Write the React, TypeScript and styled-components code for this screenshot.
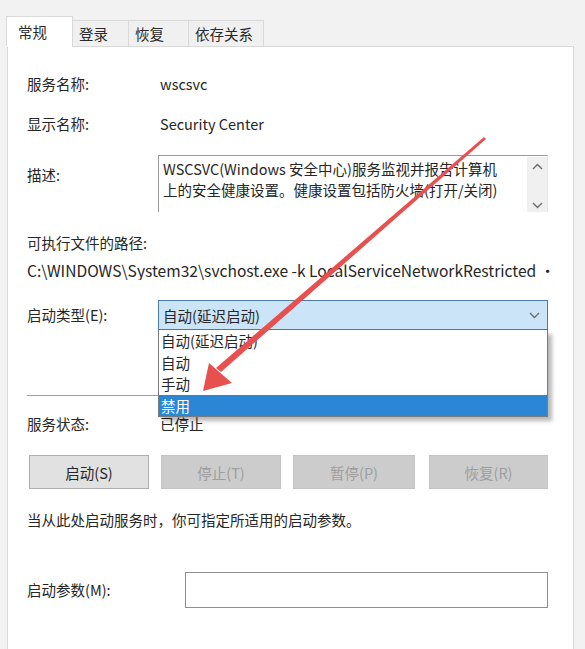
import React from "react";
import styled, { createGlobalStyle } from "styled-components";

const GlobalStyle = createGlobalStyle`
    html, body {
        margin: 0;
        padding: 0;
        background: #f2f2f2;
    }
    body {
        font-family: "Noto Sans CJK SC", "Noto Sans", sans-serif;
        font-size: 14.5px;
        color: #262626;
    }
`;

const Window = styled.div`
    position: relative;
    width: 585px;
    height: 649px;
    overflow: hidden;
    padding-top: 16px;
    box-sizing: border-box;
`;

const TabStrip = styled.div`
    display: flex;
    align-items: flex-end;
    padding-left: 6px;
    height: 31px;
    position: relative;
    z-index: 1;
`;

const Tab = styled.div<{ active?: boolean; width: number }>`
    box-sizing: border-box;
    flex: none;
    height: ${ props => props.active ? "31px" : "27px" };
    width: ${ props => props.width }px;
    padding-left: ${ props => props.active ? "11px" : "6px" };
    display: flex;
    align-items: center;
    white-space: nowrap;
    background: ${ props => props.active ? "#ffffff" : "#f0f0f0" };
    border: 1px solid #d9d9d9;
    border-bottom: ${ props => props.active ? "1px solid #ffffff" : "1px solid #d9d9d9" };
    & + & {
        margin-left: -1px;
    }
    color: #2a2a2a;
    font-size: 14.5px;
`;

const Panel = styled.div`
    margin-left: 7px;
    margin-top: -1px;
    width: 567px;
    height: 640px;
    box-sizing: border-box;
    background: #ffffff;
    border: 1px solid #d9d9d9;
    padding: 0 25px 0 19px;
`;

const FieldRow = styled.div<{ top: number; h?: number }>`
    display: grid;
    grid-template-columns: 131px 1fr;
    align-items: center;
    margin-top: ${ props => props.top }px;
    height: ${ props => props.h || 20 }px;
`;

const Label = styled.div`
    line-height: 20px;
    white-space: nowrap;
`;

const Value = styled.div`
    line-height: 20px;
    padding-left: 2px;
`;

const DescLabel = styled(Label)`
    align-self: start;
    margin-top: 10px;
`;

const DescBox = styled.div`
    position: relative;
    height: 57px;
    box-sizing: border-box;
    border-top: 1px solid #9a9a9a;
    border-left: 1px solid #9a9a9a;
    border-right: 1px solid #e6e6e6;
    padding: 2px 26px 0 4px;
    line-height: 21px;
    display: flex;
    white-space: nowrap;
`;

const DescText = styled.div`
    flex: 1;
`;

const ScrollTrack = styled.div`
    position: absolute;
    right: 0;
    top: 1px;
    bottom: 0;
    width: 20px;
    background: #f0f0f0;
    display: flex;
    flex-direction: column;
    justify-content: space-between;
    align-items: center;
    padding: 6px 0 3px;
    box-sizing: border-box;
`;

const PlainLine = styled.div<{ top: number }>`
    margin-top: ${ props => props.top }px;
    line-height: 20px;
    white-space: nowrap;
    overflow: hidden;
`;

const PathLine = styled(PlainLine)`
    font-size: 15.6px;
    margin-right: -10px;
`;

const SelectWrap = styled.div`
    position: relative;
`;

const SelectBox = styled.div`
    height: 30px;
    box-sizing: border-box;
    background: #cce4f7;
    border: 1px solid #4a7aa6;
    display: flex;
    align-items: center;
    justify-content: space-between;
    padding: 0 7px 0 4px;
`;

const DropList = styled.div`
    position: absolute;
    left: 0;
    right: 0;
    top: 30px;
    background: #ffffff;
    border: 1px solid #7a7a7a;
    border-top: none;
    box-shadow: 4px 4px 4px rgba(0, 0, 0, 0.28);
    z-index: 2;
`;

const DropItem = styled.div<{ selected?: boolean }>`
    height: 21.5px;
    line-height: 21px;
    padding-left: 2px;
    background: ${ props => props.selected ? "#2b86d5" : "transparent" };
    color: ${ props => props.selected ? "#ffffff" : "#262626" };
`;

const Separator = styled.div`
    margin-top: 65px;
    height: 1px;
    background: #a0a0a0;
`;

const ButtonRow = styled.div`
    margin-top: 21px;
    display: grid;
    grid-template-columns: 120px 120px 122px 121px;
    column-gap: 12px;
    padding-left: 2px;
    & > :nth-child(4) {
        margin-left: 2px;
    }
`;

const Button = styled.div<{ disabled?: boolean }>`
    height: 34px;
    box-sizing: border-box;
    display: flex;
    align-items: center;
    justify-content: center;
    background: ${ props => props.disabled ? "#cccccc" : "#e1e1e1" };
    border: 1px solid ${ props => props.disabled ? "#c4c4c4" : "#adadad" };
    color: ${ props => props.disabled ? "#9e9e9e" : "#262626" };
`;

const ParamInput = styled.div`
    height: 36px;
    box-sizing: border-box;
    border: 1px solid #8f8f8f;
    background: #ffffff;
    margin-left: 27px;
`;

const ArrowLayer = styled.svg`
    position: absolute;
    left: 0;
    top: 0;
    pointer-events: none;
    z-index: 5;
`;

const Chevron = ({ up }: { up?: boolean }) =>
    <svg width="11" height="7" viewBox="0 0 11 7">
        <path
            d={ up ? "M1 6 L5.5 1.5 L10 6" : "M1 1 L5.5 5.5 L10 1" }
            fill="none"
            stroke="#6d6d6d"
            strokeWidth="1.4"
        />
    </svg>

const tabs = [
    { text: "常规", width: 67, active: true },
    { text: "登录", width: 57 },
    { text: "恢复", width: 61 },
    { text: "依存关系", width: 76 },
];

const options = [ "自动(延迟启动)", "自动", "手动", "禁用" ];

const buttons = [
    { text: "启动(S)", disabled: false },
    { text: "停止(T)", disabled: true },
    { text: "暂停(P)", disabled: true },
    { text: "恢复(R)", disabled: true },
];

export default function App() {
    return (
        <Window>
            <GlobalStyle />
            <TabStrip>
                { tabs.map( tab =>
                    <Tab key={tab.text} active={tab.active} width={tab.width}>{tab.text}</Tab>
                ) }
            </TabStrip>
            <Panel>
                <FieldRow top={27}>
                    <Label>服务名称:</Label>
                    <Value>wscsvc</Value>
                </FieldRow>
                <FieldRow top={20}>
                    <Label>显示名称:</Label>
                    <Value>Security Center</Value>
                </FieldRow>
                <FieldRow top={21} h={57}>
                    <DescLabel>描述:</DescLabel>
                    <DescBox>
                        <DescText>
                            WSCSVC(Windows 安全中心)服务监视并报告计算机<br />
                            上的安全健康设置。健康设置包括防火墙(打开/关闭)
                        </DescText>
                        <ScrollTrack>
                            <Chevron up />
                            <Chevron />
                        </ScrollTrack>
                    </DescBox>
                </FieldRow>
                <PlainLine top={21}>可执行文件的路径:</PlainLine>
                <PathLine top={7}>C:\WINDOWS\System32\svchost.exe -k LocalServiceNetworkRestricted ·</PathLine>
                <FieldRow top={20} h={30}>
                    <Label>启动类型(E):</Label>
                    <SelectWrap>
                        <SelectBox>
                            <span>自动(延迟启动)</span>
                            <Chevron />
                        </SelectBox>
                        <DropList>
                            { options.map( (opt, i) =>
                                <DropItem key={opt} selected={i === options.length - 1}>{opt}</DropItem>
                            ) }
                        </DropList>
                    </SelectWrap>
                </FieldRow>
                <Separator />
                <FieldRow top={18}>
                    <Label>服务状态:</Label>
                    <Value>已停止</Value>
                </FieldRow>
                <ButtonRow>
                    { buttons.map( b =>
                        <Button key={b.text} disabled={b.disabled}>{b.text}</Button>
                    ) }
                </ButtonRow>
                <PlainLine top={21}>当从此处启动服务时，你可指定所适用的启动参数。</PlainLine>
                <FieldRow top={42} h={36}>
                    <Label>启动参数(M):</Label>
                    <ParamInput />
                </FieldRow>
            </Panel>
            <ArrowLayer width="585" height="649" viewBox="0 0 585 649">
                <path
                    d="M484 137 L486 139 L221 372 L216 368 Z"
                    fill="#e8504f"
                />
                <path
                    d="M203 391 L209 363 L232 383 Z"
                    fill="#e8504f"
                />
            </ArrowLayer>
        </Window>
    );
}
